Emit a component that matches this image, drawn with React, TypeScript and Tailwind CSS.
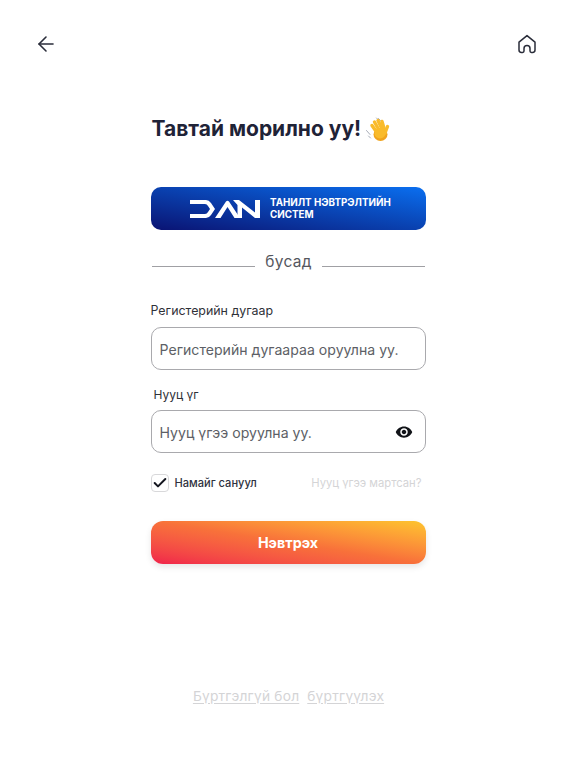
import { ArrowLeft, Check } from "lucide-react"
import { MdVisibility } from "react-icons/md"

const font = "font-['Inter','Noto_Sans',sans-serif]"

function Home() {
  return (
    <svg width="20" height="20" viewBox="0 0 20 20" fill="none" stroke="#2a2d3a" strokeWidth="1.5" strokeLinejoin="round">
      <path d="M2 8.2 L10 1.6 L18 8.2 V16 Q18 18.4 15.6 18.4 H14.4 Q13 18.4 13 17 V14.4 Q13 11.6 10 11.6 Q7 11.6 7 14.4 V17 Q7 18.4 5.6 18.4 H4.4 Q2 18.4 2 16 Z" />
    </svg>
  )
}

function Wave() {
  return (
    <svg width="34" height="34" viewBox="0 0 34 34" fill="none" strokeLinecap="round">
      <g stroke="#a8adb8" strokeWidth="1">
        <path d="M17.5 6.5 L19.5 8.5 M15.5 6 L16.5 7" />
        <path d="M5.5 18.5 L9 22.5 M7.5 24 L9.5 26" />
      </g>
      <ellipse cx="19.5" cy="22.5" rx="7" ry="6.5" fill="#f0a31e" />
      <g stroke="#f9bb2b" strokeWidth="3.4">
        <path d="M11 13.5 L17 22" />
        <path d="M13.5 10 L19 20" />
        <path d="M17 8.5 L21.5 18" />
        <path d="M21 9.5 L23.5 18" />
        <path d="M26.5 14.5 L24 21" />
      </g>
      <ellipse cx="19" cy="21.5" rx="5.5" ry="5" fill="#f9bb2b" />
    </svg>
  )
}

function DanLogo() {
  return (
    <svg width="70" height="18" viewBox="0 0 70 18" fill="white">
      <path d="M0 0 H16 Q19 0 21 3 L25 9 L21 15 Q19 18 16 18 H0 V14 H15 Q17 14 18 12 L20 9 L18 6 Q17 4 15 4 H0 Z" />
      <path d="M25 18 L36 1.5 Q37.5 0 39 1.5 L50 18 H44.5 L37.5 7 L30.5 18 Z" />
      <path d="M43 0 H49 L65 12.5 V0 H70 V18 H65 L52 7.5 V18 H47.5 V5 Z" />
    </svg>
  )
}

function Label({ children, className = "" }: { children: React.ReactNode; className?: string }) {
  return <div className={"text-[12.4px] leading-4 text-[#2f3138] " + className}>{children}</div>
}

function Field({ placeholder, children }: { placeholder: string; children?: React.ReactNode }) {
  return (
    <div className="flex h-[43px] items-center justify-between rounded-[10px] border border-[#a9a9ad] pl-2 pr-[12px] text-[14.1px] text-[#5d5f66]">
      <span className="pt-[2px]">{placeholder}</span>
      {children}
    </div>
  )
}

export default function App() {
  return (
    <main className={"flex h-[768px] w-[576px] flex-col bg-white " + font}>
      <header className="flex items-center justify-between pl-[34px] pr-[39px] pt-[32px]">
        <ArrowLeft size={24} strokeWidth={1.6} color="#2a2d3a" />
        <Home />
      </header>

      <div className="mx-auto mt-[59px] w-[275px]">
        <h1 className="flex h-[28px] items-center pl-[1px] text-[21px] font-bold leading-7 text-[#1f2337]">
          Тавтай морилно уу! <Wave />
        </h1>

        <button className="mt-[44px] flex h-[43px] w-full items-center justify-center gap-[10px] rounded-[10px] bg-gradient-to-tr from-[#0a1273] to-[#0a6ff0] pl-[6px] text-white">
          <DanLogo />
          <span className="w-[122px] whitespace-nowrap text-left text-[9.8px] font-bold leading-[12px]">
            ТАНИЛТ НЭВТРЭЛТИЙН
            <br />
            СИСТЕМ
          </span>
        </button>

        <div className="mt-[22px] flex items-center justify-between">
          <div className="ml-[1px] mt-[8px] h-px w-[103px] bg-[#a0a0a4]" />
          <span className="text-[15.5px] leading-5 tracking-[0.3px] text-[#55575e]">бусад</span>
          <div className="mt-[8px] h-px w-[103px] bg-[#a0a0a4]" />
        </div>

        <Label className="mt-[31px]">Регистерийн дугаар</Label>
        <div className="mt-[8px]">
          <Field placeholder="Регистерийн дугаараа оруулна уу." />
        </div>

        <Label className="mt-[17px] pl-[3px] text-[12px]">Нууц үг</Label>
        <div className="mt-[7px]">
          <Field placeholder="Нууц үгээ оруулна уу.">
            <MdVisibility size={18} color="#111318" />
          </Field>
        </div>

        <div className="mt-[21px] flex items-center justify-between pr-[4px]">
          <div className="flex items-center gap-[6px]">
            <div className="flex h-[18px] w-[18px] items-center justify-center rounded-[4px] border border-[#d8d8da]">
              <Check size={16} strokeWidth={3} color="#14161f" />
            </div>
            <span className="text-[11.1px] font-medium text-[#2f3240]">Намайг сануул</span>
          </div>
          <span className="text-[11.25px] text-[#d4d4d6]">Нууц үгээ мартсан?</span>
        </div>

        <button className="mt-[29px] flex h-[43px] w-[275px] items-center justify-center rounded-[12px] bg-gradient-to-tr from-[#f0204a] via-[#f8713a] to-[#fdc42e] text-[14.3px] font-bold text-white shadow-[0_3px_6px_rgba(0,0,0,0.1)]">
          Нэвтрэх
        </button>
      </div>

      <div className="mt-[122px] flex justify-center gap-[8px] pl-[1px] text-[13.75px] tracking-[0.2px] text-[#d4d4d6]">
        <span className="underline underline-offset-2">Бүртгэлгүй бол</span>
        <span className="underline underline-offset-2">бүртгүүлэх</span>
      </div>
    </main>
  )
}
